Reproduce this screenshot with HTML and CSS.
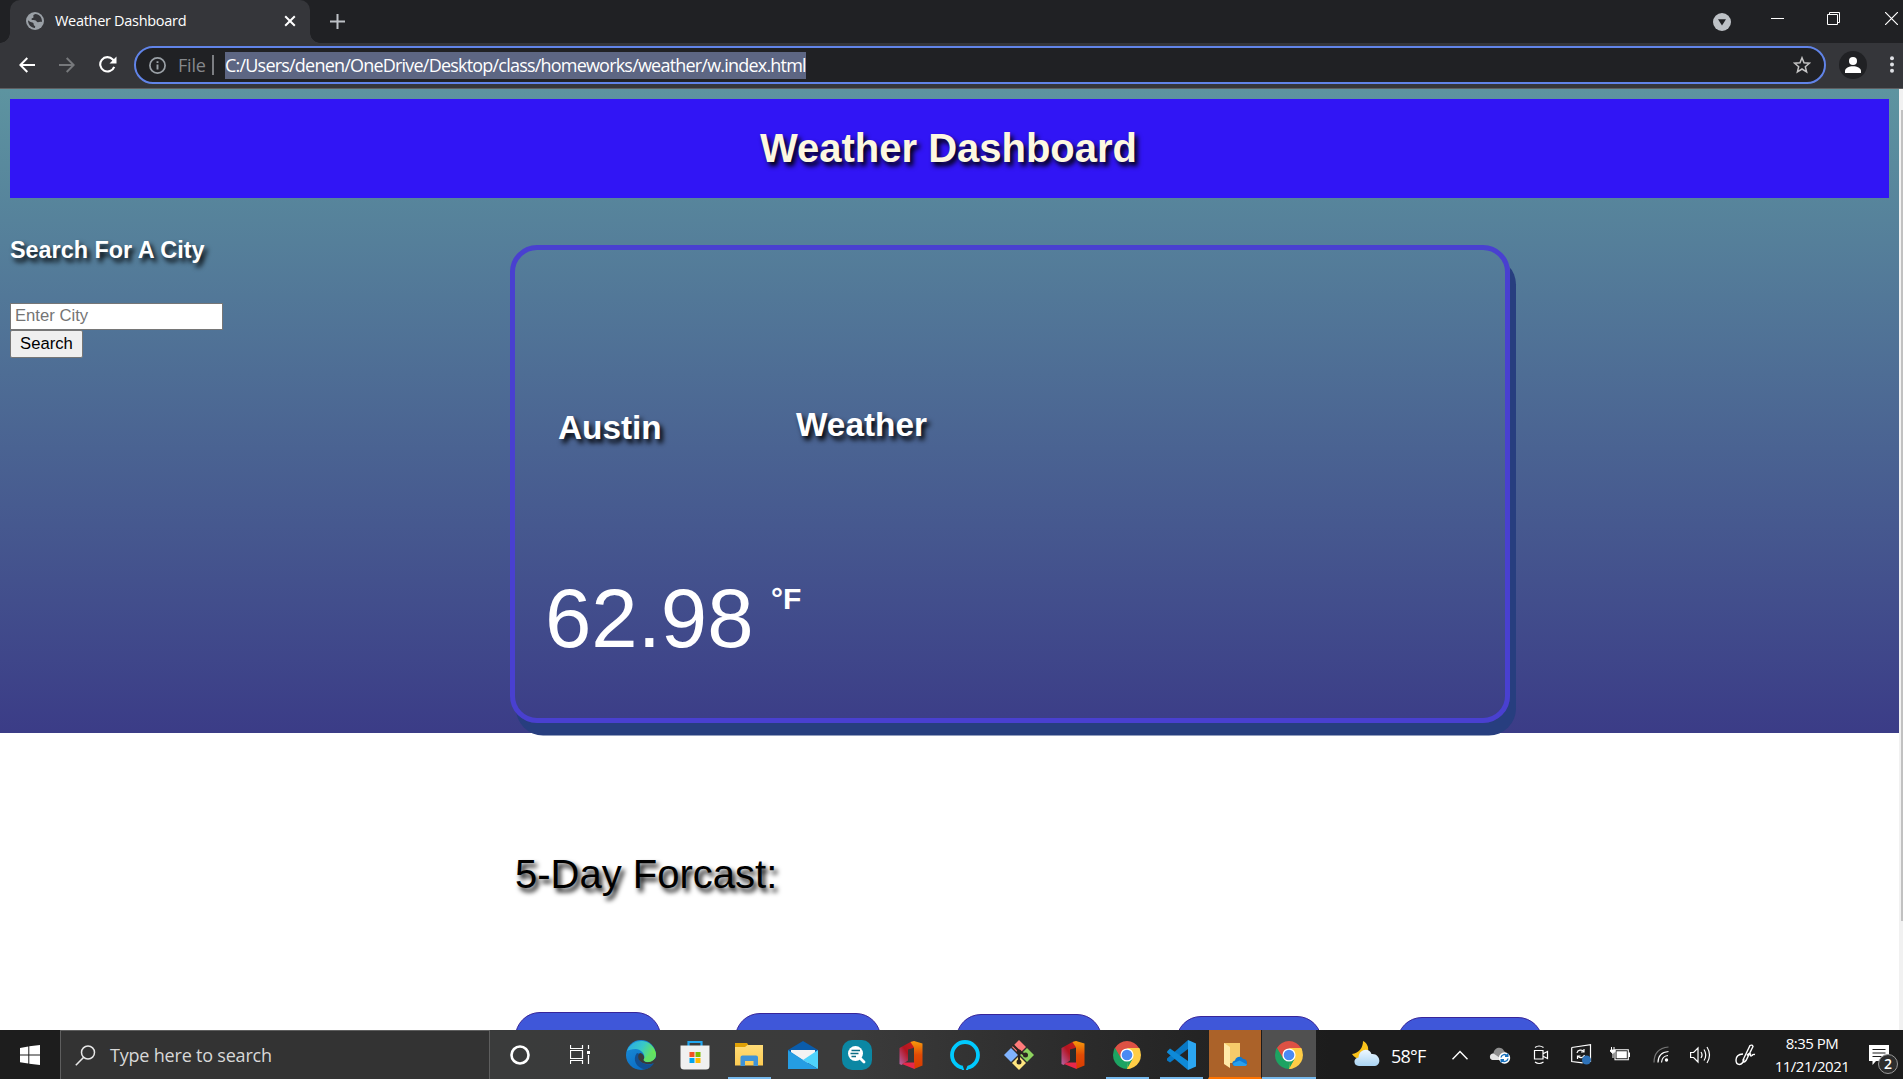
FILE: index.html
```html
<!DOCTYPE html>
<html lang="en">
<head>
<meta charset="utf-8">
<title>Weather Dashboard</title>
<link rel="stylesheet" href="styles.css">
</head>
<body>
<svg class="defs" width="0" height="0" aria-hidden="true">
  <defs>
    <linearGradient id="edgeTop" x1="0" y1="0" x2="1" y2="0.4"><stop offset="0" stop-color="#2aa6e8"/><stop offset=".55" stop-color="#38c8c8"/><stop offset="1" stop-color="#6be84f"/></linearGradient>
    <linearGradient id="edgeSide" x1="0" y1="0" x2="0.6" y2="1"><stop offset="0" stop-color="#1b8fd8"/><stop offset="1" stop-color="#0a6cc4"/></linearGradient>
    <linearGradient id="officeRed" x1="0" y1="1" x2="1" y2="0"><stop offset="0" stop-color="#b565a8"/><stop offset=".5" stop-color="#b41420"/><stop offset="1" stop-color="#c8201c"/></linearGradient>
    <linearGradient id="officeOrange" x1="0" y1="0" x2="0" y2="1"><stop offset="0" stop-color="#f79a0c"/><stop offset=".5" stop-color="#e04a05"/><stop offset="1" stop-color="#d83b01"/></linearGradient>
    <linearGradient id="folder" x1="0" y1="0" x2="0" y2="1"><stop offset="0" stop-color="#ffdc78"/><stop offset="1" stop-color="#fdcb52"/></linearGradient>
    <linearGradient id="cloud" x1="0" y1="0" x2="0" y2="1"><stop offset="0" stop-color="#eef8ff"/><stop offset="1" stop-color="#a9d4f3"/></linearGradient>
    <symbol id="office" viewBox="0 0 30 30">
      <path d="M3.500 8 14.500 2 19 1v6.500l-7 2V20.500L5.500 25 3.500 24Z" fill="url(#officeRed)"/>
      <path d="M14.500 2 18 1l8.500 2.500v22L18 29V7.500Z" fill="url(#officeOrange)"/>
      <path d="M6 24 9 22.500h9.500V29Z" fill="#e8274b"/>
    </symbol>
    <symbol id="chrome" viewBox="0 0 30 30">
      <path d="M15 15 2.900 8A14 14 0 0 1 27.100 8Z" fill="#dd5144"/>
      <path d="M15 15 27.100 8A14 14 0 0 1 15 29Z" fill="#ffcd46"/>
      <path d="M15 15V29A14 14 0 0 1 2.900 8Z" fill="#1da362"/>
      <path d="M15 8H27.100l.9 1.800L20 15Z" fill="#ffcd46"/>
      <path d="M2.900 8 9 18.500 15 15V8Z" fill="#dd5144"/>
      <path d="M9 18.500 2.900 8 1.800 10.500 8 21l7 1 .5 6.900L21 18.500Z" fill="#1da362"/>
      <path d="M21 18.500 15 29l3-.4L23 24V16l-2-4Z" fill="#ffcd46"/>
      <circle cx="15" cy="15" r="6.600" fill="#fff"/><circle cx="15" cy="15" r="5.300" fill="#4a8af4"/>
    </symbol>
  </defs>
</svg>

<div class="tabstrip">
  <div class="tab">
    <svg class="tab-globe" width="18" height="18" viewBox="0 0 18 18"><circle cx="9" cy="9" r="9" fill="#9aa0a6"/><path d="M9.500 2c-2 .3-2.600 1.600-2 2.800.3.900-.6 1-1.500 1.400-.9.300-.6 1.600.4 1.700 1.500.1 3.400-.2 4.100 1.300.5 1.100 1.800 1 2.700.9.800-.1 1.800-.4 2.800-.1C16.100 5.300 13.500 2.300 9.500 2ZM2 8.300C2 12.500 5 16 9 16l.2-2c-1.200-.3-1.700-1-1.500-2C7.600 10.800 6.600 10.400 5.500 10.300 4.200 10 3.300 9.200 2 8.300Z" fill="#35363a"/></svg>
    <span class="tab-title">Weather Dashboard</span>
    <svg width="12" height="12" viewBox="0 0 12 12"><path d="M1.200 1.200l9.600 9.600M10.800 1.200l-9.600 9.600" stroke="#fff" stroke-width="2"/></svg>
  </div>
  <svg class="new-tab" width="15" height="15" viewBox="0 0 15 15"><path d="M7.500 0v15M0 7.500h15" stroke="#bdc1c6" stroke-width="2"/></svg>
  <div class="window-controls">
    <svg width="18" height="18" viewBox="0 0 18 18"><circle cx="9" cy="9" r="9" fill="#bdc1c6"/><path d="M5 6.300h8L9 12.500Z" fill="#202124"/></svg>
    <svg width="13" height="13" viewBox="0 0 13 13"><path d="M0 6.500h13" stroke="#fff"/></svg>
    <svg width="13" height="13" viewBox="0 0 13 13"><path d="M.5 2.500h10v10H.5ZM2.500 2V.5h10v10H11" fill="none" stroke="#fff"/></svg>
    <svg width="13" height="13" viewBox="0 0 13 13"><path d="M0 0l13 13M13 0L0 13" stroke="#fff" stroke-width="1.200"/></svg>
  </div>
</div>

<div class="toolbar">
  <svg class="nav" width="16" height="16" viewBox="0 0 16 16"><path d="M16 8H1.500M8.300 1 1.300 8l7 7" fill="none" stroke="#fff" stroke-width="2"/></svg>
  <svg class="nav" width="16" height="16" viewBox="0 0 16 16"><path d="M0 8h14.500M7.700 1l7 7-7 7" fill="none" stroke="#77797c" stroke-width="2"/></svg>
  <svg class="nav reload" width="18" height="17" viewBox="0 0 18 17"><path d="M15.200 10.800A7.200 7.200 0 1 1 13.800 3.500L15 5" fill="none" stroke="#fff" stroke-width="2.100"/><path d="M17.500.5V7.500H10.500Z" fill="#fff"/></svg>
  <div class="omnibox">
    <svg width="17" height="17" viewBox="0 0 17 17"><circle cx="8.500" cy="8.500" r="7.600" fill="none" stroke="#9aa0a6" stroke-width="1.700"/><path d="M8.500 7.500v5M8.500 4.200v1.900" stroke="#9aa0a6" stroke-width="1.900"/></svg>
    <span class="scheme">File</span>
    <span class="divider"></span>
    <span class="url">C:/Users/denen/OneDrive/Desktop/class/homeworks/weather/w.index.html</span>
    <svg class="star" width="18" height="18" viewBox="0 0 18 18"><path d="M9 1.800l2 5 5.400.4-4.100 3.500 1.300 5.200L9 13l-4.600 2.900 1.300-5.200L1.600 7.200 7 6.800Z" fill="none" stroke="#c4c4c4" stroke-width="1.500"/></svg>
  </div>
  <svg class="profile" width="28" height="28" viewBox="0 0 28 28"><circle cx="14" cy="14" r="14" fill="#202124"/><circle cx="14" cy="10" r="4" fill="#fff"/><path d="M6 22v-2c0-3 4-4.800 8-4.800s8 1.800 8 4.800v2Z" fill="#fff"/></svg>
  <svg class="menu" width="4" height="17" viewBox="0 0 4 17"><g fill="#dfe1e5"><circle cx="2" cy="2.200" r="2"/><circle cx="2" cy="8.500" r="2"/><circle cx="2" cy="14.800" r="2"/></g></svg>
</div>

<div class="viewport">
  <div class="page">
    <div class="sky">
      <header class="banner"><h1>Weather Dashboard</h1></header>
      <div class="content">
        <aside class="search">
          <h3>Search For A City</h3>
          <input class="city-input" type="text" placeholder="Enter City">
          <button class="search-button">Search</button>
        </aside>
        <section class="current">
          <div class="current-titles"><h2>Austin</h2><h2 class="weather-label">Weather</h2></div>
          <div class="reading"><span class="temp">62.98</span><span class="unit">°F</span></div>
        </section>
      </div>
    </div>
    <section class="forecast">
      <p class="forecast-title">5-Day Forcast:</p>
      <div class="days">
        <div class="day"></div><div class="day"></div><div class="day"></div><div class="day"></div><div class="day"></div>
      </div>
    </section>
  </div>
  <div class="scrollbar"><div class="thumb"></div></div>
</div>

<footer class="taskbar">
  <div class="start"><svg width="20" height="20" viewBox="0 0 20 20"><path d="M0 3 8.300 1.500v8H0ZM9.300 1.300 20 0v9.500H9.300ZM0 10.500h8.300v8L0 17.300ZM9.300 10.500H20V20L9.300 18.700Z" fill="#fff"/></svg></div>
  <div class="task-search">
    <svg width="21" height="21" viewBox="0 0 21 21"><circle cx="13" cy="7.500" r="6.500" fill="none" stroke="#e8e8e8" stroke-width="1.500"/><path d="M8.500 12.500.8 20.200" stroke="#e8e8e8" stroke-width="1.600"/></svg>
    <span>Type here to search</span>
  </div>
  <div class="cell wide"><svg width="20" height="20" viewBox="0 0 20 20"><circle cx="10" cy="10" r="8.500" fill="none" stroke="#fff" stroke-width="2.600"/></svg></div>
  <div class="cell wide"><svg width="21" height="19" viewBox="0 0 21 19"><path d="M.5 0v3.500h12V0M.5 5.500h12v8H.5ZM.5 19v-3.500h12V19M18.500 0v4M18.500 10v9" fill="none" stroke="#fff" stroke-width="1.200"/><path d="M17 6h3v3h-3Z" fill="#fff"/></svg></div>
  <div class="pinned">
    <div class="cell"><svg width="30" height="30" viewBox="0 0 30 30"><circle cx="15" cy="15" r="15" fill="url(#edgeSide)"/><path d="M1 11A15 15 0 0 1 30 14c0 5-4 8-8 8-3 0-5-1.500-4.200-2.700C20 16 16 9 9.500 9 5.500 9 2.500 10 1 11Z" fill="url(#edgeTop)"/><path d="M11 13C6 19 10 28 19 29.400 23 28.700 26 26.500 28 23.300c-4 2-10 1.700-13.500-1.800C12 19 12.500 16 14 14Z" fill="#124f92"/><path d="M14 13c-2.500 2-2.500 6 .5 8.500 4 3.300 9.500 3.300 13.500 1.500l2-1v-4l-5 3.500c-4 1.500-8 .3-7.200-2.200C19 17 17 13 14 13Z" fill="#3a3a3a"/><path d="M30 14.500c-.3 4.500-3.800 7.500-8 7.500-3 0-5-1.500-4.200-2.700l8-7Z" fill="#62df65"/></svg></div>
    <div class="cell"><svg width="30" height="30" viewBox="0 0 30 30"><path d="M8.500 7V2h13v5" fill="none" stroke="#22a7f0" stroke-width="2.200"/><path d="M.5 5.500h29V26a3.500 3.500 0 0 1-3.500 3.500h-22A3.500 3.500 0 0 1 .5 26Z" fill="#f0f0f0"/><path d="M9.500 12h5v5h-5Z" fill="#f25022"/><path d="M15.500 12h5v5h-5Z" fill="#7fba00"/><path d="M9.500 18h5v5h-5Z" fill="#00a4ef"/><path d="M15.500 18h5v5h-5Z" fill="#ffb900"/></svg></div>
    <div class="cell open"><svg width="30" height="30" viewBox="0 0 30 30"><path d="M1 3h12l2 3-2 3H1Z" fill="#e0a106"/><path d="M1 7h10l2.500-2H29v20.500H1Z" fill="url(#folder)"/><path d="M6.500 26V17.500a2 2 0 0 1 2-2h13.500a2 2 0 0 1 2 2V26h-4.500v-5h-8.500v5Z" fill="#3f93d8"/></svg></div>
    <div class="cell"><svg width="30" height="30" viewBox="0 0 30 30"><path d="M0 10 15 1l15 9v5H0Z" fill="#0a5cab"/><path d="M3 10h24v10L15 25 3 20Z" fill="#f3f3f3"/><path d="M0 10 15 20 0 29Z" fill="#1d93dc"/><path d="M30 10v19L15 20Z" fill="#4fd3fb"/><path d="M0 29V11l30 18Z" fill="#259de3"/></svg></div>
    <div class="cell"><svg width="30" height="30" viewBox="0 0 30 30"><rect width="30" height="30" rx="10" fill="#0b87a3"/><path d="m17.500 17.500 4.500 4.500" stroke="#fff" stroke-width="2.800" stroke-linecap="round"/><circle cx="13.500" cy="13.500" r="7.500" fill="#fff"/><path d="M9.500 10.500h8.500M8.500 13.500h8M9.500 16.500h4.500" stroke="#0b6d85" stroke-width="1.700"/></svg></div>
    <div class="cell"><svg width="30" height="30"><use href="#office"/></svg></div>
    <div class="cell"><svg width="30" height="30" viewBox="0 0 30 30"><circle cx="15" cy="15" r="13" fill="none" stroke="#00caff" stroke-width="3.800"/><path d="M12 25.500V30h6v-2Z" fill="#00caff"/><path d="M12.500 25l1.700 5h1.600l2-5Z" fill="#343434"/></svg></div>
    <div class="cell"><svg width="30" height="30" viewBox="0 0 30 30"><path d="M15 0 22 7l-7 7-7-7Z" fill="#ff7b7b"/><path d="m7 8 7 7-7 7-7-7Z" fill="#80b3ff"/><path d="m23 8 7 7-7 7-7-7Z" fill="#8dd35f"/><path d="m15 16 7 7-7 7-7-7Z" fill="#ffe680"/><path d="m9 5 6 6v10M15 11l6 4" fill="none" stroke="#2c2520" stroke-width="2.200"/><circle cx="15" cy="12" r="2.500" fill="#2c2520"/><circle cx="15" cy="22" r="2.500" fill="#2c2520"/><circle cx="21.500" cy="15" r="2.500" fill="#2c2520"/></svg></div>
    <div class="cell"><svg width="30" height="30"><use href="#office"/></svg></div>
    <div class="cell open"><svg width="30" height="30"><use href="#chrome"/></svg></div>
    <div class="cell open"><svg width="30" height="30" viewBox="0 0 30 30"><path d="M1 18.500 22 0v9L4 22.500 1 20.500Z" fill="#0878c4"/><path d="M1 11.500 4 8.500 22 21v9L1 12.500Z" fill="#0e8ad8"/><path d="M22 0l8 3.500v23L22 30Z" fill="#2ba6f2"/></svg></div>
    <div class="cell attention"><svg width="30" height="30" viewBox="0 0 30 30"><path d="M4 4h16v20H8Z" fill="#f6cb6a"/><path d="M4 4l6 4v21l-6-4Z" fill="#ffe9a8"/><path d="M15 27c-3-.2-4-4.800 0-5.500C16 17.500 21 16.500 23 20c3-.3 4 2 4 3 .5 2-.5 4-2.500 4Z" fill="#0f7ad4"/><path d="M15 27c-2-.4-2.500-2-1.500-3l6-2.500 7.500 4c-.5 1-1.300 1.500-2.500 1.500Z" fill="#28a0ee"/></svg></div>
    <div class="cell open active"><svg width="30" height="30"><use href="#chrome"/></svg></div>
  </div>
  <div class="tray">
    <div class="forecast-tray"><svg width="28" height="27" viewBox="0 0 28 27"><path d="M11 1c0 7-4 12-11 13 4 7 14 6 16-2C17 7 15 3 11 1Z" fill="#f9c21a"/><path d="M7 26C1 26 1 18 6.500 17.500 7 9 17 7 19.500 14c9-1 11 12 2 12Z" fill="url(#cloud)"/></svg><span>58°F</span></div>
    <div class="tc"><svg width="16" height="10" viewBox="0 0 16 10"><path d="M.5 9.300 8 1.500l7.500 7.800" fill="none" stroke="#fff" stroke-width="1.400"/></svg></div>
    <div class="tc"><svg width="22" height="18" viewBox="0 0 22 18"><path d="M4 14C-.5 13.500 0 7.500 4.500 7.500 5 1 13 0 15 5l3 3-3 6Z" fill="#8f8f8f"/><path d="M3.500 14c-4-1-3-6.500 1-6.500L14 14Z" fill="#e4e4e4"/><circle cx="15.500" cy="12" r="5.700" fill="#fff"/><path d="M12 11.500a3.600 3.600 0 0 1 6.500-1.500M19 12.500a3.600 3.600 0 0 1-6.500 1.500M18.800 7.500V10.300H16M12.200 16.500v-2.800H15" fill="none" stroke="#1670bd" stroke-width="1.400"/></svg></div>
    <div class="tc camera"><svg width="16" height="20" viewBox="0 0 16 20"><path d="M1.500 5.500h8.500v8.500H1.500ZM10.500 8.500l4-2v7l-4-2M2 2.500Q6-.5 10.500 2.500M2 17q4 3 8.500 0" fill="none" stroke="#fff" stroke-width="1.200"/></svg></div>
    <div class="tc update"><svg width="21" height="21" viewBox="0 0 21 21"><path d="M.7 3.500 19.500.7V18M.7 3.500v14l11 1.300" fill="none" stroke="#fff" stroke-width="1.200"/><path d="M6 9c.5-3 5-4 6.800-1.300M13 5v3h-3M13.500 11c-1 3-5 3.500-6.500 1.200M6.500 15v-3h3" fill="none" stroke="#fff" stroke-width="1.200"/><circle cx="15.500" cy="16" r="4.500" fill="#2e72b8"/></svg></div>
    <div class="tc battery"><svg width="20" height="14" viewBox="0 0 20 14"><path d="M5 2.700h13.300v10H5Z" fill="none" stroke="#fff" stroke-width="1.100"/><path d="M6.500 4.200h10.300V11.200H6.500ZM18.500 5.500H20v4.500h-1.500Z" fill="#fff"/><path d="M1.500 0v3M4 0v3M.5 3h4.500v1.500L3 6.500.5 4.500ZM3 6v5" fill="#fff" stroke="#fff"/></svg></div>
    <div class="tc"><svg width="17" height="17" viewBox="0 0 17 17"><circle cx="13.500" cy="14" r="1.700" fill="#fff"/><g fill="none" stroke="#fff" stroke-width="1.200"><path d="M8.500 16.500Q9 10 15 9.500M5 16.500Q5 6.500 15.500 5.500"/><path d="M1 16.500Q1 2.500 15.500 1" stroke="#777"/></g></svg></div>
    <div class="tc speaker"><svg width="21" height="18" viewBox="0 0 21 18"><path d="M.6 6.500h3L8 2v14l-4.400-4.500h-3ZM11 6q2 3 0 6M14 3.500q3.500 5.500 0 11M17 1q5 8 0 16" fill="none" stroke="#fff" stroke-width="1.200"/></svg></div>
    <div class="tc pen"><svg width="21" height="22" viewBox="0 0 21 22"><path d="M8 16 15 1.500q2.200-1.200 3 1L11 16.500Q8 20 8 16ZM8 10Q1 10.500 1 16 1 20.500 4.500 20.500 8 20 9 15M12 11.500q2-3 3.500-1.500Q15 13 17 11.500q1-1.500 3-1" fill="none" stroke="#fff" stroke-width="1.400"/></svg></div>
    <div class="clock"><span>8:35 PM</span><span class="date">11/21/2021</span></div>
    <div class="notify"><svg width="20" height="20" viewBox="0 0 20 20"><path d="M0 0h20v16H7l-3.500 4V16H0Z" fill="#fff"/><path d="M3.500 4.500h13M3.500 8h13M3.500 11.500h9" stroke="#1c1c1c" stroke-width="1.200"/></svg><span class="count">2</span></div>
  </div>
</footer>
</body>
</html>
```
FILE: styles.css
```css
* { box-sizing: border-box; }

body {
  margin: 0;
  width: 100vw;
  height: 100vh;
  overflow: hidden;
  display: flex;
  flex-direction: column;
  font-family: "Open Sans", "Noto Sans", sans-serif;
  background: #fff;
}

svg { display: block; flex: none; }
.defs { position: absolute; }
h1, h2, h3, p { margin: 0; }

/* Browser chrome */
.tabstrip {
  height: 43px;
  flex: none;
  display: flex;
  align-items: flex-start;
  background: #202124;
  padding-left: 10px;
}
.tab {
  position: relative;
  width: 300px;
  height: 43px;
  padding: 0 14px 1px 16px;
  display: flex;
  align-items: center;
  background: #35363a;
  border-radius: 10px 10px 0 0;
  color: #fff;
  font-size: 14.5px;
}
.tab::before, .tab::after {
  content: "";
  position: absolute;
  bottom: 0;
  width: 10px;
  height: 10px;
}
.tab::before { left: -10px; background: radial-gradient(circle at 0 0, transparent 9.5px, #35363a 10px); }
.tab::after { right: -10px; background: radial-gradient(circle at 100% 0, transparent 9.5px, #35363a 10px); }
.tab-title { flex: 1; margin-left: 11px; padding-bottom: 2px; letter-spacing: -0.3px; white-space: nowrap; }
.new-tab { margin: 14px 0 0 20px; }
.window-controls {
  margin-left: auto;
  display: grid;
  grid-template-columns: 58px 56px 58px 18px;
  align-items: center;
  height: 37px;
}
.window-controls svg:first-child { margin-top: 7px; }

.toolbar {
  height: 46px;
  flex: none;
  display: flex;
  align-items: center;
  padding: 0 9px 2px 19px;
  background: #35363a;
  border-bottom: 1px solid #5e5f62;
}
.nav { margin-right: 24px; }
.nav.reload { margin-right: 17px; }
.omnibox {
  width: 1693px;
  height: 38px;
  display: flex;
  align-items: center;
  padding: 1px 13px 0;
  border: 2px solid #6184e8;
  border-radius: 19px;
  background: #202124;
  font-size: 18px;
  white-space: nowrap;
}
.scheme { width: 25px; margin-left: 12px; color: #85888c; letter-spacing: -0.2px; }
.divider { width: 2px; height: 20px; margin: 0 11px 0 9px; background: #7c7e82; }
.url { height: 27px; line-height: 26px; background: #5d6683; color: #fff; letter-spacing: -0.795px; }
.star { margin-left: auto; }
.profile { margin-left: 13px; }
.menu { margin-left: 23px; }

/* Page */
.viewport {
  flex: 1;
  min-height: 0;
  display: flex;
  overflow: hidden;
  font-family: "Liberation Sans", Arial, sans-serif;
}
.page { flex: 1; min-width: 0; }
.sky {
  height: 644px;
  padding: 10px;
  background: linear-gradient(#5d94a0, #3b3c87);
}
.banner {
  height: 99px;
  display: flex;
  align-items: center;
  justify-content: center;
  background: #3115f5;
}
.banner h1 {
  font-size: 40px;
  line-height: 46px;
  color: #fdf8e1;
  text-shadow: 3px 4px 5px #000;
  margin: 0 2px 2px 0;
}
.content { display: flex; }
.search { width: 500px; padding-top: 39px; }
.search h3 {
  font-size: 23.4px;
  line-height: 27px;
  color: #fff;
  text-shadow: 3px 4px 5px #000;
  margin-bottom: 39px;
}
.city-input, .search-button {
  display: block;
  font: 16.667px "Liberation Sans", Arial, sans-serif;
  border: 1px solid #767676;
  border-radius: 0;
}
.city-input { width: 213px; height: 27px; padding: 0 4px 2px; background: #fff; }
.city-input::placeholder { color: #757575; }
.search-button { width: 73px; height: 28px; padding: 0 0 1px; background: #efefef; color: #000; border-radius: 2px; }

.current {
  width: 1000px;
  height: 478px;
  margin-top: 47px;
  padding: 153px 32px 0 43px;
  border: 5px solid #4940d0;
  border-radius: 27px;
  box-shadow: 6px 12.5px 0 #273e7f;
  color: #fff;
}
.current-titles { display: flex; align-items: flex-start; }
.current-titles h2 {
  width: 238px;
  padding-top: 6px;
  font-size: 33.333px;
  line-height: 38px;
  text-shadow: 3px 4px 5px #000;
}
.current-titles .weather-label { padding-top: 3px; }
.reading { display: flex; align-items: flex-start; margin: 124px 0 0 -13px; }
.temp { width: 226px; font-size: 83.333px; line-height: 96px; }
.unit { font-size: 30px; font-weight: bold; line-height: 34px; padding-top: 11px; }

.forecast { padding: 118px 0 0 515px; }
.forecast-title { font-size: 40px; line-height: 46px; color: #000; text-shadow: 3px 4px 5px #000; }
.days { display: grid; grid-template-columns: repeat(5, 146px); column-gap: 74.400px; padding-top: 115px; }
.day {
  height: 250px;
  border: 1px solid #37259a;
  border-radius: 25px;
  background: #3f57d9;
}
.day:nth-child(2) { margin-top: 1px; }
.day:nth-child(3) { margin-top: 2px; }
.day:nth-child(4) { margin-top: 4px; }
.day:nth-child(5) { margin-top: 5px; }

.scrollbar { width: 4px; padding: 21px 0 0 2px; background: #f1f1f1; }
.thumb { height: 811px; background: #c1c1c1; }

/* Taskbar */
.taskbar {
  height: 49px;
  flex: none;
  display: flex;
  background: linear-gradient(90deg, #1d1d1d 60px, #3a3b3b 490px, #3b3b3b 850px, #2b2b2b 1080px, #1c1c1c 1330px);
  color: #fff;
}
.start { width: 60px; display: flex; align-items: center; justify-content: center; }
.task-search {
  width: 430px;
  display: flex;
  align-items: center;
  padding-left: 14px;
  background: #333;
  border: 1px solid #5e5e5e;
  border-bottom: 0;
  color: #d8d8d8;
  font-size: 18px;
}
.task-search span { margin-left: 14px; white-space: nowrap; letter-spacing: -0.2px; }
.pinned { display: flex; margin-left: 4px; }
.cell {
  position: relative;
  width: 54px;
  display: flex;
  align-items: center;
  justify-content: center;
}
.cell.wide { width: 60px; }
.open::after {
  content: "";
  position: absolute;
  bottom: 0;
  left: 6px;
  right: 5px;
  height: 2px;
  background: #76b9ed;
}
.attention { background: #ab6229; border-bottom: 2px solid #ff7300; border-left: 1px solid #222; border-right: 1px solid #1c1c1c; }
.active { background: #505050; }
.active::after { left: 0; right: 0; }

.tray { margin-left: auto; display: grid; grid-template-columns: 100px 40px 40px 42px 38px 40px 42px 36px 54px 80px 51px; }
.tray > div { display: flex; align-items: center; justify-content: center; }
.tray .forecast-tray { justify-content: flex-start; padding-left: 12px; font-size: 18px; }
.forecast-tray svg { margin-top: -2px; }
.forecast-tray span { margin-left: 11px; letter-spacing: -0.8px; padding-top: 3px; }
.tray .battery { padding-bottom: 1px; }
.tray .clock { flex-direction: column; font-size: 15px; line-height: 23px; letter-spacing: -0.5px; white-space: nowrap; }
.tray .notify { position: relative; justify-content: flex-start; padding-left: 17px; }
.count {
  position: absolute;
  left: 26px;
  top: 24px;
  width: 20px;
  height: 20px;
  border: 1px solid #999;
  border-radius: 50%;
  background: #2d2d2d;
  font-size: 14px;
  font-weight: 600;
  line-height: 18px;
  text-align: center;
}
```
